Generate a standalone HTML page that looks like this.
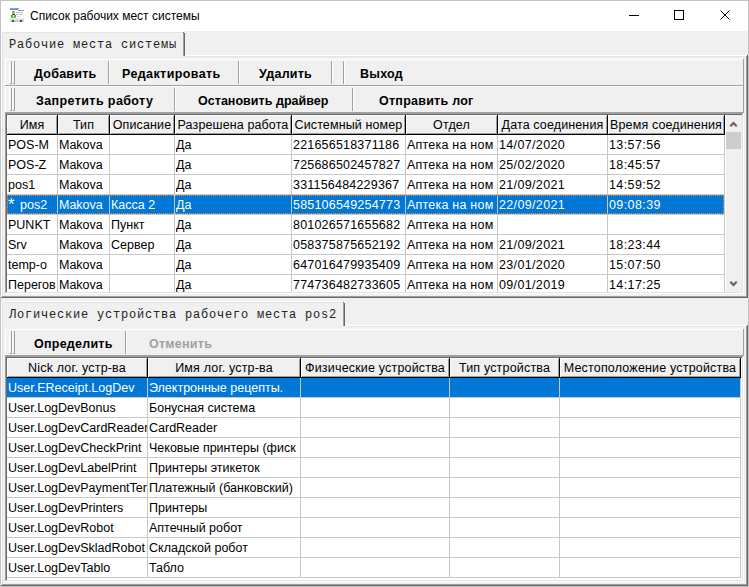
<!DOCTYPE html><html><head><meta charset="utf-8"><style>
*{margin:0;padding:0;box-sizing:border-box}
html,body{width:749px;height:587px;overflow:hidden;background:#f0f0f0;font-family:"Liberation Sans",sans-serif;font-size:12.5px;color:#000}
.a{position:absolute}
.t{position:absolute;white-space:nowrap;line-height:14px}
.mono{font-family:"Liberation Mono",monospace;font-size:12px;letter-spacing:0.8px;color:#222}
.b{font-weight:bold;letter-spacing:0.25px}
</style></head><body>
<div class="a" style="left:0px;top:0px;width:749px;height:587px;background:#f0f0f0"></div>
<div class="a" style="left:0px;top:0px;width:749px;height:31px;background:#ffffff"></div>
<div class="a" style="left:0px;top:0px;width:749px;height:1px;background:#c3c3c3"></div>
<div class="a" style="left:0px;top:0px;width:1px;height:587px;background:#c3c3c3"></div>
<div class="a" style="left:748px;top:0px;width:1px;height:587px;background:#c3c3c3"></div>
<div class="a" style="left:0px;top:586px;width:749px;height:1px;background:#c3c3c3"></div>
<svg class="a" style="left:0;top:0" width="30" height="26" shape-rendering="crispEdges">
 <rect x="10" y="8" width="8" height="2" fill="#4a8ff0"/>
 <rect x="11" y="8" width="6" height="1" fill="#78adfa"/>
 <rect x="18" y="8" width="1" height="1" fill="#a898d8"/>
 <rect x="18" y="10" width="6" height="1" fill="#9090a8"/>
 <rect x="10" y="18" width="14" height="4" fill="#dcdcdc"/>
 <rect x="10" y="18" width="14" height="1" fill="#ececec"/>
 <rect x="10" y="21" width="14" height="1" fill="#c4c4c4"/>
 <rect x="12" y="20" width="2" height="2" fill="#4a4a4a"/>
 <rect x="20" y="20" width="2" height="2" fill="#4a4a4a"/>
 <rect x="16" y="12" width="7" height="1" fill="#c4c4c4"/>
 <rect x="16" y="14" width="7" height="1" fill="#c8c8c8"/>
 <rect x="17" y="16" width="3" height="1" fill="#d4d4d4"/>
 <rect x="13" y="11" width="1" height="1" fill="#9a6a48"/>
 <rect x="12" y="11" width="1" height="1" fill="#d8c0b0"/>
 <rect x="14" y="11" width="1" height="1" fill="#d8c0b0"/>
 <rect x="12" y="12" width="3" height="2" fill="#d89a6a"/>
 <rect x="12" y="13" width="1" height="1" fill="#e0b898"/>
 <rect x="14" y="13" width="1" height="1" fill="#e0b898"/>
 <rect x="12" y="14" width="3" height="1" fill="#507040"/>
 <rect x="13" y="14" width="1" height="1" fill="#203018"/>
 <rect x="11" y="15" width="5" height="3" fill="#3cbc3c"/>
 <rect x="11" y="17" width="5" height="1" fill="#70c870"/>
 <rect x="13" y="15" width="1" height="2" fill="#f0fff0"/>
</svg>
<div class="t " style="left:30px;top:9px;font-size:12px">Список рабочих мест системы</div>
<div class="a" style="left:629px;top:15px;width:10px;height:1px;background:#000"></div>
<div class="a" style="left:674px;top:10px;width:10px;height:10px;border:1px solid #000"></div>
<svg class="a" style="left:720px;top:10px" width="10" height="10" viewBox="0 0 10 10"><path d="M0.5 0.5L9.5 9.5M9.5 0.5L0.5 9.5" stroke="#000" stroke-width="1"/></svg>
<div class="a" style="left:1px;top:55px;width:747px;height:1px;background:#ffffff"></div>
<div class="a" style="left:2px;top:56px;width:745px;height:1px;background:#e3e3e3"></div>
<div class="a" style="left:1px;top:55px;width:1px;height:242px;background:#ffffff"></div>
<div class="a" style="left:2px;top:56px;width:1px;height:240px;background:#e3e3e3"></div>
<div class="a" style="left:746px;top:56px;width:1px;height:241px;background:#a0a0a0"></div>
<div class="a" style="left:747px;top:55px;width:1px;height:243px;background:#696969"></div>
<div class="a" style="left:2px;top:296px;width:745px;height:1px;background:#a0a0a0"></div>
<div class="a" style="left:1px;top:297px;width:747px;height:1px;background:#696969"></div>
<div class="a" style="left:1px;top:31px;width:184px;height:26px;background:#f0f0f0"></div>
<div class="a" style="left:3px;top:31px;width:180px;height:1px;background:#ffffff"></div>
<div class="a" style="left:1px;top:33px;width:1px;height:24px;background:#ffffff"></div>
<div class="a" style="left:2px;top:32px;width:1px;height:1px;background:#ffffff"></div>
<div class="a" style="left:3px;top:32px;width:179px;height:1px;background:#e3e3e3"></div>
<div class="a" style="left:2px;top:33px;width:1px;height:24px;background:#e3e3e3"></div>
<div class="a" style="left:183px;top:32px;width:1px;height:1px;background:#696969"></div>
<div class="a" style="left:184px;top:33px;width:1px;height:23px;background:#696969"></div>
<div class="a" style="left:183px;top:33px;width:1px;height:23px;background:#a0a0a0"></div>
<div class="t mono" style="left:9px;top:38px;">Рабочие места системы</div>
<div class="a" style="left:5px;top:59px;width:738px;height:1px;background:#ffffff"></div>
<div class="a" style="left:5px;top:59px;width:1px;height:26px;background:#ffffff"></div>
<div class="a" style="left:5px;top:85px;width:739px;height:1px;background:#a0a0a0"></div>
<div class="a" style="left:743px;top:59px;width:1px;height:26px;background:#a0a0a0"></div>
<div class="a" style="left:9px;top:61px;width:1px;height:22px;background:#ffffff"></div>
<div class="a" style="left:11px;top:61px;width:1px;height:23px;background:#a0a0a0"></div>
<div class="a" style="left:10px;top:83px;width:2px;height:1px;background:#a0a0a0"></div>
<div class="a" style="left:12px;top:61px;width:1px;height:22px;background:#ffffff"></div>
<div class="a" style="left:14px;top:61px;width:1px;height:23px;background:#a0a0a0"></div>
<div class="a" style="left:13px;top:83px;width:2px;height:1px;background:#a0a0a0"></div>
<div class="a" style="left:5px;top:86px;width:738px;height:1px;background:#ffffff"></div>
<div class="a" style="left:5px;top:86px;width:1px;height:26px;background:#ffffff"></div>
<div class="a" style="left:5px;top:112px;width:739px;height:1px;background:#a0a0a0"></div>
<div class="a" style="left:743px;top:86px;width:1px;height:26px;background:#a0a0a0"></div>
<div class="a" style="left:9px;top:88px;width:1px;height:22px;background:#ffffff"></div>
<div class="a" style="left:11px;top:88px;width:1px;height:23px;background:#a0a0a0"></div>
<div class="a" style="left:10px;top:110px;width:2px;height:1px;background:#a0a0a0"></div>
<div class="a" style="left:12px;top:88px;width:1px;height:22px;background:#ffffff"></div>
<div class="a" style="left:14px;top:88px;width:1px;height:23px;background:#a0a0a0"></div>
<div class="a" style="left:13px;top:110px;width:2px;height:1px;background:#a0a0a0"></div>
<div class="t b" style="left:34px;top:67px;">Добавить</div>
<div class="a" style="left:108px;top:61px;width:1px;height:23px;background:#a0a0a0"></div>
<div class="a" style="left:109px;top:61px;width:1px;height:23px;background:#ffffff"></div>
<div class="t b" style="left:122px;top:67px;letter-spacing:0.4px">Редактировать</div>
<div class="a" style="left:238px;top:61px;width:1px;height:23px;background:#a0a0a0"></div>
<div class="a" style="left:239px;top:61px;width:1px;height:23px;background:#ffffff"></div>
<div class="t b" style="left:259px;top:67px;">Удалить</div>
<div class="a" style="left:331px;top:61px;width:1px;height:23px;background:#a0a0a0"></div>
<div class="a" style="left:332px;top:61px;width:1px;height:23px;background:#ffffff"></div>
<div class="a" style="left:343px;top:61px;width:1px;height:23px;background:#a0a0a0"></div>
<div class="a" style="left:344px;top:61px;width:1px;height:23px;background:#ffffff"></div>
<div class="t b" style="left:360px;top:67px;">Выход</div>
<div class="t b" style="left:36px;top:94px;letter-spacing:0.4px">Запретить работу</div>
<div class="a" style="left:174px;top:88px;width:1px;height:23px;background:#a0a0a0"></div>
<div class="a" style="left:175px;top:88px;width:1px;height:23px;background:#ffffff"></div>
<div class="t b" style="left:198px;top:94px;letter-spacing:0.03px">Остановить драйвер</div>
<div class="a" style="left:352px;top:88px;width:1px;height:23px;background:#a0a0a0"></div>
<div class="a" style="left:353px;top:88px;width:1px;height:23px;background:#ffffff"></div>
<div class="t b" style="left:379px;top:94px;">Отправить лог</div>
<div class="a" style="left:5px;top:113px;width:739px;height:1px;background:#a0a0a0"></div>
<div class="a" style="left:5px;top:113px;width:1px;height:181px;background:#a0a0a0"></div>
<div class="a" style="left:6px;top:114px;width:737px;height:1px;background:#696969"></div>
<div class="a" style="left:6px;top:114px;width:1px;height:179px;background:#696969"></div>
<div class="a" style="left:5px;top:293px;width:739px;height:1px;background:#ffffff"></div>
<div class="a" style="left:743px;top:113px;width:1px;height:181px;background:#ffffff"></div>
<div class="a" style="left:6px;top:292px;width:737px;height:1px;background:#e3e3e3"></div>
<div class="a" style="left:742px;top:114px;width:1px;height:179px;background:#e3e3e3"></div>
<div class="a" style="left:7px;top:115px;width:735px;height:177px;overflow:hidden;background:#fff">
<div class="t" style="left:1px;top:23px;width:49px;overflow:hidden;color:#000;">POS-M</div>
<div class="t" style="left:52px;top:23px;width:50px;overflow:hidden;color:#000;">Makova</div>
<div class="t" style="left:169px;top:23px;width:115px;overflow:hidden;color:#000;">Да</div>
<div class="t" style="left:286px;top:23px;width:112px;overflow:hidden;color:#000;letter-spacing:0.2px;">221656518371186</div>
<div class="t" style="left:400px;top:23px;width:90px;overflow:hidden;color:#000;letter-spacing:0.22px;">Аптека на ном</div>
<div class="t" style="left:492px;top:23px;width:108px;overflow:hidden;color:#000;letter-spacing:0.35px;">14/07/2020</div>
<div class="t" style="left:602px;top:23px;width:115px;overflow:hidden;color:#000;letter-spacing:0.4px;">13:57:56</div>
<div class="a" style="left:0px;top:39px;width:718px;height:1px;background:#c8c8c8"></div>
<div class="t" style="left:1px;top:43px;width:49px;overflow:hidden;color:#000;">POS-Z</div>
<div class="t" style="left:52px;top:43px;width:50px;overflow:hidden;color:#000;">Makova</div>
<div class="t" style="left:169px;top:43px;width:115px;overflow:hidden;color:#000;">Да</div>
<div class="t" style="left:286px;top:43px;width:112px;overflow:hidden;color:#000;letter-spacing:0.2px;">725686502457827</div>
<div class="t" style="left:400px;top:43px;width:90px;overflow:hidden;color:#000;letter-spacing:0.22px;">Аптека на ном</div>
<div class="t" style="left:492px;top:43px;width:108px;overflow:hidden;color:#000;letter-spacing:0.35px;">25/02/2020</div>
<div class="t" style="left:602px;top:43px;width:115px;overflow:hidden;color:#000;letter-spacing:0.4px;">18:45:57</div>
<div class="a" style="left:0px;top:59px;width:718px;height:1px;background:#c8c8c8"></div>
<div class="t" style="left:1px;top:63px;width:49px;overflow:hidden;color:#000;">pos1</div>
<div class="t" style="left:52px;top:63px;width:50px;overflow:hidden;color:#000;">Makova</div>
<div class="t" style="left:169px;top:63px;width:115px;overflow:hidden;color:#000;">Да</div>
<div class="t" style="left:286px;top:63px;width:112px;overflow:hidden;color:#000;letter-spacing:0.2px;">331156484229367</div>
<div class="t" style="left:400px;top:63px;width:90px;overflow:hidden;color:#000;letter-spacing:0.22px;">Аптека на ном</div>
<div class="t" style="left:492px;top:63px;width:108px;overflow:hidden;color:#000;letter-spacing:0.35px;">21/09/2021</div>
<div class="t" style="left:602px;top:63px;width:115px;overflow:hidden;color:#000;letter-spacing:0.4px;">14:59:52</div>
<div class="a" style="left:0px;top:79px;width:718px;height:1px;background:#c8c8c8"></div>
<div class="a" style="left:0px;top:80px;width:717px;height:19px;background:#0078d7"></div>
<div class="t" style="left:1px;top:83px;width:49px;overflow:hidden;color:#fff;"><span style="font-size:17px;line-height:0;position:relative;top:1px;letter-spacing:2px">*</span> pos2</div>
<div class="t" style="left:52px;top:83px;width:50px;overflow:hidden;color:#fff;">Makova</div>
<div class="t" style="left:104px;top:83px;width:63px;overflow:hidden;color:#fff;">Касса 2</div>
<div class="t" style="left:169px;top:83px;width:115px;overflow:hidden;color:#fff;">Да</div>
<div class="t" style="left:286px;top:83px;width:112px;overflow:hidden;color:#fff;letter-spacing:0.2px;">585106549254773</div>
<div class="t" style="left:400px;top:83px;width:90px;overflow:hidden;color:#fff;letter-spacing:0.22px;">Аптека на ном</div>
<div class="t" style="left:492px;top:83px;width:108px;overflow:hidden;color:#fff;letter-spacing:0.35px;">22/09/2021</div>
<div class="t" style="left:602px;top:83px;width:115px;overflow:hidden;color:#fff;letter-spacing:0.4px;">09:08:39</div>
<div class="a" style="left:0px;top:99px;width:718px;height:1px;background:#c8c8c8"></div>
<div class="t" style="left:1px;top:103px;width:49px;overflow:hidden;color:#000;">PUNKT</div>
<div class="t" style="left:52px;top:103px;width:50px;overflow:hidden;color:#000;">Makova</div>
<div class="t" style="left:104px;top:103px;width:63px;overflow:hidden;color:#000;">Пункт</div>
<div class="t" style="left:169px;top:103px;width:115px;overflow:hidden;color:#000;">Да</div>
<div class="t" style="left:286px;top:103px;width:112px;overflow:hidden;color:#000;letter-spacing:0.2px;">801026571655682</div>
<div class="t" style="left:400px;top:103px;width:90px;overflow:hidden;color:#000;letter-spacing:0.22px;">Аптека на ном</div>
<div class="a" style="left:0px;top:119px;width:718px;height:1px;background:#c8c8c8"></div>
<div class="t" style="left:1px;top:123px;width:49px;overflow:hidden;color:#000;">Srv</div>
<div class="t" style="left:52px;top:123px;width:50px;overflow:hidden;color:#000;">Makova</div>
<div class="t" style="left:104px;top:123px;width:63px;overflow:hidden;color:#000;">Сервер</div>
<div class="t" style="left:169px;top:123px;width:115px;overflow:hidden;color:#000;">Да</div>
<div class="t" style="left:286px;top:123px;width:112px;overflow:hidden;color:#000;letter-spacing:0.2px;">058375875652192</div>
<div class="t" style="left:400px;top:123px;width:90px;overflow:hidden;color:#000;letter-spacing:0.22px;">Аптека на ном</div>
<div class="t" style="left:492px;top:123px;width:108px;overflow:hidden;color:#000;letter-spacing:0.35px;">21/09/2021</div>
<div class="t" style="left:602px;top:123px;width:115px;overflow:hidden;color:#000;letter-spacing:0.4px;">18:23:44</div>
<div class="a" style="left:0px;top:139px;width:718px;height:1px;background:#c8c8c8"></div>
<div class="t" style="left:1px;top:143px;width:49px;overflow:hidden;color:#000;">temp-o</div>
<div class="t" style="left:52px;top:143px;width:50px;overflow:hidden;color:#000;">Makova</div>
<div class="t" style="left:169px;top:143px;width:115px;overflow:hidden;color:#000;">Да</div>
<div class="t" style="left:286px;top:143px;width:112px;overflow:hidden;color:#000;letter-spacing:0.2px;">647016479935409</div>
<div class="t" style="left:400px;top:143px;width:90px;overflow:hidden;color:#000;letter-spacing:0.22px;">Аптека на ном</div>
<div class="t" style="left:492px;top:143px;width:108px;overflow:hidden;color:#000;letter-spacing:0.35px;">23/01/2020</div>
<div class="t" style="left:602px;top:143px;width:115px;overflow:hidden;color:#000;letter-spacing:0.4px;">15:07:50</div>
<div class="a" style="left:0px;top:159px;width:718px;height:1px;background:#c8c8c8"></div>
<div class="t" style="left:1px;top:163px;width:49px;overflow:hidden;color:#000;">Перегов</div>
<div class="t" style="left:52px;top:163px;width:50px;overflow:hidden;color:#000;">Makova</div>
<div class="t" style="left:169px;top:163px;width:115px;overflow:hidden;color:#000;">Да</div>
<div class="t" style="left:286px;top:163px;width:112px;overflow:hidden;color:#000;letter-spacing:0.2px;">774736482733605</div>
<div class="t" style="left:400px;top:163px;width:90px;overflow:hidden;color:#000;letter-spacing:0.22px;">Аптека на ном</div>
<div class="t" style="left:492px;top:163px;width:108px;overflow:hidden;color:#000;letter-spacing:0.35px;">09/01/2019</div>
<div class="t" style="left:602px;top:163px;width:115px;overflow:hidden;color:#000;letter-spacing:0.4px;">14:17:25</div>
<div class="a" style="left:0px;top:179px;width:718px;height:1px;background:#c8c8c8"></div>
<div class="a" style="left:50px;top:20px;width:1px;height:157px;background:#c8c8c8"></div>
<div class="a" style="left:102px;top:20px;width:1px;height:157px;background:#c8c8c8"></div>
<div class="a" style="left:167px;top:20px;width:1px;height:157px;background:#c8c8c8"></div>
<div class="a" style="left:284px;top:20px;width:1px;height:157px;background:#c8c8c8"></div>
<div class="a" style="left:398px;top:20px;width:1px;height:157px;background:#c8c8c8"></div>
<div class="a" style="left:490px;top:20px;width:1px;height:157px;background:#c8c8c8"></div>
<div class="a" style="left:600px;top:20px;width:1px;height:157px;background:#c8c8c8"></div>
<div class="a" style="left:717px;top:20px;width:1px;height:157px;background:#c8c8c8"></div>
<div class="a" style="left:0;top:80px;width:717px;height:19px;border:1px dotted #ff8728"></div>
<div class="a" style="left:0px;top:0px;width:718px;height:20px;background:#f0f0f0"></div>
<div class="a" style="left:0px;top:0px;width:50px;height:1px;background:#ffffff"></div>
<div class="a" style="left:0px;top:0px;width:1px;height:19px;background:#ffffff"></div>
<div class="a" style="left:49px;top:1px;width:1px;height:18px;background:#a0a0a0"></div>
<div class="a" style="left:1px;top:18px;width:49px;height:1px;background:#a0a0a0"></div>
<div class="a" style="left:50px;top:0px;width:1px;height:20px;background:#000"></div>
<div class="t" style="left:0px;top:3px;width:50px;text-align:center;overflow:hidden;letter-spacing:0.12px">Имя</div>
<div class="a" style="left:51px;top:0px;width:51px;height:1px;background:#ffffff"></div>
<div class="a" style="left:51px;top:0px;width:1px;height:19px;background:#ffffff"></div>
<div class="a" style="left:101px;top:1px;width:1px;height:18px;background:#a0a0a0"></div>
<div class="a" style="left:52px;top:18px;width:50px;height:1px;background:#a0a0a0"></div>
<div class="a" style="left:102px;top:0px;width:1px;height:20px;background:#000"></div>
<div class="t" style="left:51px;top:3px;width:51px;text-align:center;overflow:hidden;letter-spacing:0.12px">Тип</div>
<div class="a" style="left:103px;top:0px;width:64px;height:1px;background:#ffffff"></div>
<div class="a" style="left:103px;top:0px;width:1px;height:19px;background:#ffffff"></div>
<div class="a" style="left:166px;top:1px;width:1px;height:18px;background:#a0a0a0"></div>
<div class="a" style="left:104px;top:18px;width:63px;height:1px;background:#a0a0a0"></div>
<div class="a" style="left:167px;top:0px;width:1px;height:20px;background:#000"></div>
<div class="t" style="left:103px;top:3px;width:64px;text-align:center;overflow:hidden;letter-spacing:0.12px">Описание</div>
<div class="a" style="left:168px;top:0px;width:116px;height:1px;background:#ffffff"></div>
<div class="a" style="left:168px;top:0px;width:1px;height:19px;background:#ffffff"></div>
<div class="a" style="left:283px;top:1px;width:1px;height:18px;background:#a0a0a0"></div>
<div class="a" style="left:169px;top:18px;width:115px;height:1px;background:#a0a0a0"></div>
<div class="a" style="left:284px;top:0px;width:1px;height:20px;background:#000"></div>
<div class="t" style="left:168px;top:3px;width:116px;text-align:center;overflow:hidden;letter-spacing:0.12px">Разрешена работа</div>
<div class="a" style="left:285px;top:0px;width:113px;height:1px;background:#ffffff"></div>
<div class="a" style="left:285px;top:0px;width:1px;height:19px;background:#ffffff"></div>
<div class="a" style="left:397px;top:1px;width:1px;height:18px;background:#a0a0a0"></div>
<div class="a" style="left:286px;top:18px;width:112px;height:1px;background:#a0a0a0"></div>
<div class="a" style="left:398px;top:0px;width:1px;height:20px;background:#000"></div>
<div class="t" style="left:285px;top:3px;width:113px;text-align:center;overflow:hidden;letter-spacing:0.12px">Системный номер</div>
<div class="a" style="left:399px;top:0px;width:91px;height:1px;background:#ffffff"></div>
<div class="a" style="left:399px;top:0px;width:1px;height:19px;background:#ffffff"></div>
<div class="a" style="left:489px;top:1px;width:1px;height:18px;background:#a0a0a0"></div>
<div class="a" style="left:400px;top:18px;width:90px;height:1px;background:#a0a0a0"></div>
<div class="a" style="left:490px;top:0px;width:1px;height:20px;background:#000"></div>
<div class="t" style="left:399px;top:3px;width:91px;text-align:center;overflow:hidden;letter-spacing:0.12px">Отдел</div>
<div class="a" style="left:491px;top:0px;width:109px;height:1px;background:#ffffff"></div>
<div class="a" style="left:491px;top:0px;width:1px;height:19px;background:#ffffff"></div>
<div class="a" style="left:599px;top:1px;width:1px;height:18px;background:#a0a0a0"></div>
<div class="a" style="left:492px;top:18px;width:108px;height:1px;background:#a0a0a0"></div>
<div class="a" style="left:600px;top:0px;width:1px;height:20px;background:#000"></div>
<div class="t" style="left:491px;top:3px;width:109px;text-align:center;overflow:hidden;letter-spacing:0.12px">Дата соединения</div>
<div class="a" style="left:601px;top:0px;width:116px;height:1px;background:#ffffff"></div>
<div class="a" style="left:601px;top:0px;width:1px;height:19px;background:#ffffff"></div>
<div class="a" style="left:716px;top:1px;width:1px;height:18px;background:#a0a0a0"></div>
<div class="a" style="left:602px;top:18px;width:115px;height:1px;background:#a0a0a0"></div>
<div class="a" style="left:717px;top:0px;width:1px;height:20px;background:#000"></div>
<div class="t" style="left:601px;top:3px;width:116px;text-align:center;overflow:hidden;letter-spacing:0.12px">Время соединения</div>
<div class="a" style="left:0px;top:19px;width:718px;height:1px;background:#000"></div>
</div>
<div class="a" style="left:725px;top:115px;width:1px;height:177px;background:#ffffff"></div>
<div class="a" style="left:726px;top:115px;width:16px;height:177px;background:#f0f0f0"></div>
<div class="a" style="left:726px;top:132px;width:15px;height:17px;background:#cdcdcd"></div>
<svg class="a" style="left:729px;top:120px" width="9" height="8" viewBox="0 0 9 8"><path d="M1.3 6.2L4.5 3L7.7 6.2" stroke="#606060" stroke-width="2.1" fill="none"/></svg>
<svg class="a" style="left:729px;top:280px" width="9" height="8" viewBox="0 0 9 8"><path d="M1.3 1.8L4.5 5L7.7 1.8" stroke="#606060" stroke-width="2.1" fill="none"/></svg>
<div class="a" style="left:1px;top:325px;width:747px;height:1px;background:#ffffff"></div>
<div class="a" style="left:2px;top:326px;width:745px;height:1px;background:#e3e3e3"></div>
<div class="a" style="left:1px;top:325px;width:1px;height:260px;background:#ffffff"></div>
<div class="a" style="left:2px;top:326px;width:1px;height:258px;background:#e3e3e3"></div>
<div class="a" style="left:746px;top:326px;width:1px;height:259px;background:#a0a0a0"></div>
<div class="a" style="left:747px;top:325px;width:1px;height:261px;background:#696969"></div>
<div class="a" style="left:2px;top:584px;width:745px;height:1px;background:#a0a0a0"></div>
<div class="a" style="left:1px;top:585px;width:747px;height:1px;background:#696969"></div>
<div class="a" style="left:1px;top:301px;width:344px;height:26px;background:#f0f0f0"></div>
<div class="a" style="left:3px;top:301px;width:340px;height:1px;background:#ffffff"></div>
<div class="a" style="left:1px;top:303px;width:1px;height:24px;background:#ffffff"></div>
<div class="a" style="left:2px;top:302px;width:1px;height:1px;background:#ffffff"></div>
<div class="a" style="left:3px;top:302px;width:339px;height:1px;background:#e3e3e3"></div>
<div class="a" style="left:2px;top:303px;width:1px;height:24px;background:#e3e3e3"></div>
<div class="a" style="left:343px;top:302px;width:1px;height:1px;background:#696969"></div>
<div class="a" style="left:344px;top:303px;width:1px;height:23px;background:#696969"></div>
<div class="a" style="left:343px;top:303px;width:1px;height:23px;background:#a0a0a0"></div>
<div class="t mono" style="left:9px;top:308px;">Логические устройства рабочего места pos2</div>
<div class="a" style="left:5px;top:329px;width:738px;height:1px;background:#ffffff"></div>
<div class="a" style="left:5px;top:329px;width:1px;height:26px;background:#ffffff"></div>
<div class="a" style="left:5px;top:355px;width:739px;height:1px;background:#a0a0a0"></div>
<div class="a" style="left:743px;top:329px;width:1px;height:26px;background:#a0a0a0"></div>
<div class="a" style="left:9px;top:331px;width:1px;height:22px;background:#ffffff"></div>
<div class="a" style="left:11px;top:331px;width:1px;height:23px;background:#a0a0a0"></div>
<div class="a" style="left:10px;top:353px;width:2px;height:1px;background:#a0a0a0"></div>
<div class="a" style="left:12px;top:331px;width:1px;height:22px;background:#ffffff"></div>
<div class="a" style="left:14px;top:331px;width:1px;height:23px;background:#a0a0a0"></div>
<div class="a" style="left:13px;top:353px;width:2px;height:1px;background:#a0a0a0"></div>
<div class="t b" style="left:34px;top:337px;">Определить</div>
<div class="a" style="left:125px;top:331px;width:1px;height:23px;background:#a0a0a0"></div>
<div class="a" style="left:126px;top:331px;width:1px;height:23px;background:#ffffff"></div>
<div class="t b" style="left:149px;top:337px;color:#a0a0a0">Отменить</div>
<div class="a" style="left:5px;top:356px;width:739px;height:1px;background:#a0a0a0"></div>
<div class="a" style="left:5px;top:356px;width:1px;height:226px;background:#a0a0a0"></div>
<div class="a" style="left:6px;top:357px;width:737px;height:1px;background:#696969"></div>
<div class="a" style="left:6px;top:357px;width:1px;height:224px;background:#696969"></div>
<div class="a" style="left:5px;top:581px;width:739px;height:1px;background:#ffffff"></div>
<div class="a" style="left:743px;top:356px;width:1px;height:226px;background:#ffffff"></div>
<div class="a" style="left:6px;top:580px;width:737px;height:1px;background:#e3e3e3"></div>
<div class="a" style="left:742px;top:357px;width:1px;height:224px;background:#e3e3e3"></div>
<div class="a" style="left:7px;top:358px;width:735px;height:222px;overflow:hidden;background:#fff">
<div class="a" style="left:0px;top:20px;width:733px;height:19px;background:#0078d7"></div>
<div class="t" style="left:1px;top:23px;width:139px;overflow:hidden;color:#fff;">User.EReceipt.LogDev</div>
<div class="t" style="left:142px;top:23px;width:151px;overflow:hidden;color:#fff;">Электронные рецепты.</div>
<div class="a" style="left:0px;top:39px;width:734px;height:1px;background:#c8c8c8"></div>
<div class="t" style="left:1px;top:43px;width:139px;overflow:hidden;color:#000;">User.LogDevBonus</div>
<div class="t" style="left:142px;top:43px;width:151px;overflow:hidden;color:#000;">Бонусная система</div>
<div class="a" style="left:0px;top:59px;width:734px;height:1px;background:#c8c8c8"></div>
<div class="t" style="left:1px;top:63px;width:139px;overflow:hidden;color:#000;">User.LogDevCardReader</div>
<div class="t" style="left:142px;top:63px;width:151px;overflow:hidden;color:#000;">CardReader</div>
<div class="a" style="left:0px;top:79px;width:734px;height:1px;background:#c8c8c8"></div>
<div class="t" style="left:1px;top:83px;width:139px;overflow:hidden;color:#000;">User.LogDevCheckPrint</div>
<div class="t" style="left:142px;top:83px;width:151px;overflow:hidden;color:#000;">Чековые принтеры (фиск</div>
<div class="a" style="left:0px;top:99px;width:734px;height:1px;background:#c8c8c8"></div>
<div class="t" style="left:1px;top:103px;width:139px;overflow:hidden;color:#000;">User.LogDevLabelPrint</div>
<div class="t" style="left:142px;top:103px;width:151px;overflow:hidden;color:#000;">Принтеры этикеток</div>
<div class="a" style="left:0px;top:119px;width:734px;height:1px;background:#c8c8c8"></div>
<div class="t" style="left:1px;top:123px;width:139px;overflow:hidden;color:#000;">User.LogDevPaymentTerminal</div>
<div class="t" style="left:142px;top:123px;width:151px;overflow:hidden;color:#000;">Платежный (банковский)</div>
<div class="a" style="left:0px;top:139px;width:734px;height:1px;background:#c8c8c8"></div>
<div class="t" style="left:1px;top:143px;width:139px;overflow:hidden;color:#000;">User.LogDevPrinters</div>
<div class="t" style="left:142px;top:143px;width:151px;overflow:hidden;color:#000;">Принтеры</div>
<div class="a" style="left:0px;top:159px;width:734px;height:1px;background:#c8c8c8"></div>
<div class="t" style="left:1px;top:163px;width:139px;overflow:hidden;color:#000;">User.LogDevRobot</div>
<div class="t" style="left:142px;top:163px;width:151px;overflow:hidden;color:#000;">Аптечный робот</div>
<div class="a" style="left:0px;top:179px;width:734px;height:1px;background:#c8c8c8"></div>
<div class="t" style="left:1px;top:183px;width:139px;overflow:hidden;color:#000;">User.LogDevSkladRobot</div>
<div class="t" style="left:142px;top:183px;width:151px;overflow:hidden;color:#000;">Складской робот</div>
<div class="a" style="left:0px;top:199px;width:734px;height:1px;background:#c8c8c8"></div>
<div class="t" style="left:1px;top:203px;width:139px;overflow:hidden;color:#000;">User.LogDevTablo</div>
<div class="t" style="left:142px;top:203px;width:151px;overflow:hidden;color:#000;">Табло</div>
<div class="a" style="left:0px;top:219px;width:734px;height:1px;background:#c8c8c8"></div>
<div class="a" style="left:140px;top:20px;width:1px;height:200px;background:#c8c8c8"></div>
<div class="a" style="left:293px;top:20px;width:1px;height:200px;background:#c8c8c8"></div>
<div class="a" style="left:442px;top:20px;width:1px;height:200px;background:#c8c8c8"></div>
<div class="a" style="left:552px;top:20px;width:1px;height:200px;background:#c8c8c8"></div>
<div class="a" style="left:733px;top:20px;width:1px;height:200px;background:#c8c8c8"></div>
<div class="a" style="left:0px;top:0px;width:734px;height:20px;background:#f0f0f0"></div>
<div class="a" style="left:0px;top:0px;width:140px;height:1px;background:#ffffff"></div>
<div class="a" style="left:0px;top:0px;width:1px;height:19px;background:#ffffff"></div>
<div class="a" style="left:139px;top:1px;width:1px;height:18px;background:#a0a0a0"></div>
<div class="a" style="left:1px;top:18px;width:139px;height:1px;background:#a0a0a0"></div>
<div class="a" style="left:140px;top:0px;width:1px;height:20px;background:#000"></div>
<div class="t" style="left:0px;top:3px;width:140px;text-align:center;overflow:hidden;letter-spacing:0.18px">Nick лог. устр-ва</div>
<div class="a" style="left:141px;top:0px;width:152px;height:1px;background:#ffffff"></div>
<div class="a" style="left:141px;top:0px;width:1px;height:19px;background:#ffffff"></div>
<div class="a" style="left:292px;top:1px;width:1px;height:18px;background:#a0a0a0"></div>
<div class="a" style="left:142px;top:18px;width:151px;height:1px;background:#a0a0a0"></div>
<div class="a" style="left:293px;top:0px;width:1px;height:20px;background:#000"></div>
<div class="t" style="left:141px;top:3px;width:152px;text-align:center;overflow:hidden;letter-spacing:0.18px">Имя лог. устр-ва</div>
<div class="a" style="left:294px;top:0px;width:148px;height:1px;background:#ffffff"></div>
<div class="a" style="left:294px;top:0px;width:1px;height:19px;background:#ffffff"></div>
<div class="a" style="left:441px;top:1px;width:1px;height:18px;background:#a0a0a0"></div>
<div class="a" style="left:295px;top:18px;width:147px;height:1px;background:#a0a0a0"></div>
<div class="a" style="left:442px;top:0px;width:1px;height:20px;background:#000"></div>
<div class="t" style="left:294px;top:3px;width:148px;text-align:center;overflow:hidden;letter-spacing:0.18px">Физические устройства</div>
<div class="a" style="left:443px;top:0px;width:109px;height:1px;background:#ffffff"></div>
<div class="a" style="left:443px;top:0px;width:1px;height:19px;background:#ffffff"></div>
<div class="a" style="left:551px;top:1px;width:1px;height:18px;background:#a0a0a0"></div>
<div class="a" style="left:444px;top:18px;width:108px;height:1px;background:#a0a0a0"></div>
<div class="a" style="left:552px;top:0px;width:1px;height:20px;background:#000"></div>
<div class="t" style="left:443px;top:3px;width:109px;text-align:center;overflow:hidden;letter-spacing:0.18px">Тип устройства</div>
<div class="a" style="left:553px;top:0px;width:180px;height:1px;background:#ffffff"></div>
<div class="a" style="left:553px;top:0px;width:1px;height:19px;background:#ffffff"></div>
<div class="a" style="left:732px;top:1px;width:1px;height:18px;background:#a0a0a0"></div>
<div class="a" style="left:554px;top:18px;width:179px;height:1px;background:#a0a0a0"></div>
<div class="a" style="left:733px;top:0px;width:1px;height:20px;background:#000"></div>
<div class="t" style="left:553px;top:3px;width:180px;text-align:center;overflow:hidden;letter-spacing:0.18px">Местоположение устройства</div>
<div class="a" style="left:0px;top:19px;width:734px;height:1px;background:#000"></div>
</div>
</body></html>
